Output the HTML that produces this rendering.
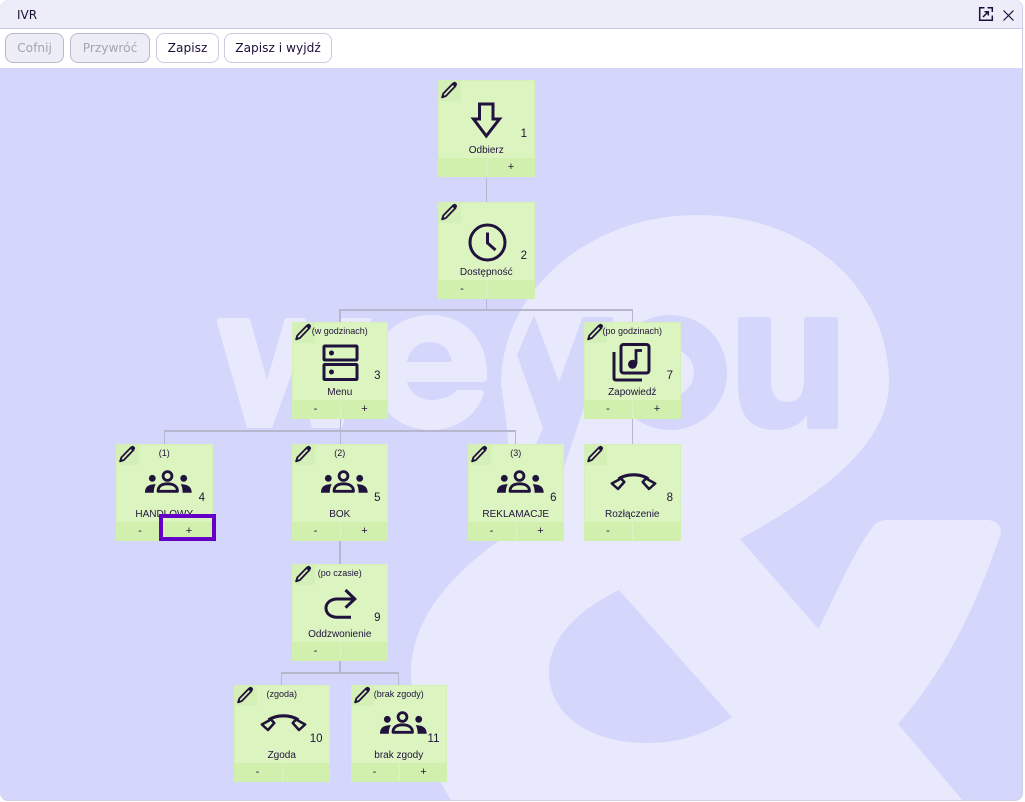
<!DOCTYPE html>
<html lang="pl"><head><meta charset="utf-8"><title>IVR</title>
<style>
*{box-sizing:border-box}
html,body{margin:0;padding:0;width:1025px;height:802px;overflow:hidden;background:#fff}
#win{position:absolute;left:0;top:0;width:1023px;height:801px;border:1px solid #cfd0e6;border-top:0;border-left:0;border-radius:8px;overflow:hidden;background:#d4d6fb}
#head{position:absolute;left:0;top:0;width:100%;height:29px;background:#ecedf8;border-bottom:1px solid #c9cae6;font:12px "DejaVu Sans","Liberation Sans",sans-serif;color:#1e0f3a}
#head span{position:absolute;left:17px;top:8px;line-height:14px}
#tool{position:absolute;left:0;top:29px;width:100%;height:39px;background:#fff}
.btn{position:absolute;top:4px;height:30px;border:1px solid #cbcbe2;border-radius:8px;background:#fff;color:#1e0f3a;font:12.2px/28px "DejaVu Sans","Liberation Sans",sans-serif;text-align:center}
.btn.d{background:#ecedf6;border-color:#b9b9c9;color:#a5a4b1}
#bg{position:absolute;left:0;top:0}
.c{position:absolute;background:#b6b6cc}
.n{position:absolute;width:96.5px;height:97px;background:#dcf5c0;border:1px solid #d6f1b8;font-family:"Liberation Sans",Arial,sans-serif;color:#20123c}
.n svg{position:absolute;left:-1px;top:-1px;width:97px;height:97px;overflow:visible}
.pc{position:absolute;left:-1px;top:-1px;width:23px;height:21px;background:#d5f0b6}
.t{position:absolute;left:-1px;width:96.5px;top:2px;line-height:12px;font-size:9px;text-align:center;white-space:nowrap}
.l{position:absolute;left:-1px;width:96.5px;top:63px;line-height:13px;font-size:10px;text-align:center;white-space:nowrap}
.k{position:absolute;right:6.5px;top:45.5px;line-height:15px;font-size:11.5px}
.bar{position:absolute;left:-1px;top:77px;width:96.5px;height:19px;background:#d1efad}
.bar:after{content:"";position:absolute;left:48px;top:1px;width:1px;height:17px;background:#dcf3c2}
.m,.p{position:absolute;top:2px;width:20px;text-align:center;font-size:11px;line-height:14px}
.m{left:14px}.p{left:63px}
#sel{position:absolute;left:159px;top:514px;width:57px;height:27px;border:4px solid #6500c9}
</style></head><body>
<svg width="0" height="0" style="position:absolute">
<defs>
<g id="pen" stroke="#20123c" stroke-linejoin="round" transform="translate(-.5 0)"><path d="M5.800 13.500 L4.600 17.400 L8.400 16 L18 6 L15.400 3.600 Z" fill="none" stroke-width="1.800"/><path d="M4.500 17.500 L5.300 15 L7 16.600 Z" fill="#20123c" stroke-width="1"/><path d="M15 4 L16.600 2.400 C17.500 1.800 19.600 3.700 18.900 4.800 L17.300 6.400 Z" fill="#20123c" stroke-width="1"/></g>
<g id="grp"><circle cx="51.500" cy="32" r="4.400" fill="none" stroke="#20123c" stroke-width="2.800"/><path d="M42 47.300 C42 42 46 39.800 51.500 39.800 C57 39.800 61.500 42 61.500 47.300 Z" fill="none" stroke="#20123c" stroke-width="2.800" stroke-linejoin="round"/><circle cx="36.300" cy="34.300" r="3.400" fill="#20123c"/><circle cx="67.700" cy="34.300" r="3.400" fill="#20123c"/><path d="M29 48.700 C29 43 32 40.300 39.800 40.100 C38.200 43 37.800 45.500 37.800 48.700 Z" fill="#20123c"/><path d="M75.700 48.700 C75.700 43 72 40.300 64.800 40.100 C66.300 43 66.600 45.500 66.600 48.700 Z" fill="#20123c"/></g>
<g id="ph" fill="none" stroke="#20123c" stroke-linejoin="round"><path stroke-width="3.200" d="M34.500 35 C39.500 31.500 45 30.800 49.500 30.800 C54 30.800 59.500 31.500 64.500 35"/><path stroke-width="2.500" d="M27.800 39.500 L37 34.500 L40.300 38 L34 45 Z M71.200 39.500 L62 34.500 L58.700 38 L65 45 Z"/></g>
</defs></svg>
<div id="win">
<svg id="bg" width="1025" height="802" viewBox="0 0 1025 802">
<path fill="#e8e9fd" d="M217 323 Q216 318 221 318 L247 318 Q250 318 250.500 321 L267 380 L285 318 L305 318 L322 380 L340 318 L372 318 L342 428 L312 428 L295 365 L272 428 L247 428 Z"/>
<path fill="#e8e9fd" fill-rule="evenodd" d="M430 315 C465 315 487 340 487 373 L487 378 Q487 382 482 382 L407 382 C410 393 420 400 431 400 C441 400 451 397 457 390 L479 390 Q486 390 483 396 C475 417 455 430 431 430 C397 430 372 405 372 372 C372 340 397 315 430 315 Z M407 362 H452 C450 350 442 342 430 342 C418 342 409 350 407 362 Z"/>
<path fill="#e8e9fd" fill-rule="evenodd" d="M501 385 C501 290 590 215 697 215 C810 215 889 290 889 382 C889 450 810 500 740 539 L818.500 629 C840 585 855 550 872 528 C875 523 880 520 888 520 L986 520 C996 520 1002 525 1000.600 534 C975 610 945 670 898 724 L964 802 L452 802 C428 763 411 720 411 673 C411 620 450 575 500 540 C515 500 510 440 501 385 Z M619 590 C575 612 549 640 549 672 C549 715 590 743 647 743 C680 743 708 733 732 717 Z"/>
<path fill="#d4d6fb" d="M534 315 L517 355 L543 428 L525 470 L563 470 L613 320 Q614 317 610 317 L585 317 Q582.500 317 582 319 L559 382 Z"/>
<path fill="#d4d6fb" fill-rule="evenodd" d="M670 315 C702 315 727 340 727 372.500 C727 405 702 430 670 430 C638 430 613 405 613 372.500 C613 340 638 315 670 315 Z M670 348.500 C657 348.500 646 359 646 372.500 C646 386 657 396.500 670 396.500 C683 396.500 694 386 694 372.500 C694 359 683 348.500 670 348.500 Z"/>
<path fill="#d4d6fb" d="M741 317 H768 Q771 317 771 320 V380 Q771 402 787 402 Q804 402 804 380 V320 Q804 317 807 317 H835 Q838 317 838 320 V426 Q838 429 835 429 H810 Q807 429 807 426 V415 Q797 430 775 430 Q738 430 738 385 V320 Q738 317 741 317 Z"/>
</svg>

<div class="c" style="left:486px;top:178px;width:1px;height:24px"></div>
<div class="c" style="left:486px;top:296px;width:1px;height:14px"></div>
<div class="c" style="left:339px;top:309px;width:294px;height:2px"></div>
<div class="c" style="left:339px;top:309px;width:2px;height:14px"></div>
<div class="c" style="left:632px;top:309px;width:1px;height:14px"></div>
<div class="c" style="left:340px;top:419px;width:1px;height:25px"></div>
<div class="c" style="left:164px;top:430px;width:352px;height:2px"></div>
<div class="c" style="left:164px;top:430px;width:1px;height:14px"></div>
<div class="c" style="left:515px;top:430px;width:1px;height:14px"></div>
<div class="c" style="left:632px;top:419px;width:1px;height:25px"></div>
<div class="c" style="left:339px;top:540px;width:2px;height:24px"></div>
<div class="c" style="left:339px;top:661px;width:2px;height:12px"></div>
<div class="c" style="left:281px;top:672px;width:118px;height:2px"></div>
<div class="c" style="left:281px;top:672px;width:1px;height:14px"></div>
<div class="c" style="left:398px;top:672px;width:1px;height:14px"></div>

<div class="n" style="left:438px;top:80px"><i class="pc"></i><svg viewBox="0 0 97 97"><use href="#pen"/><path d="M41.500 24 H55 V39 H61.500 L48.300 56 L35.500 39 H41.500 Z" fill="none" stroke="#20123c" stroke-width="3"/></svg><span class="l">Odbierz</span><span class="k">1</span><div class="bar"><span class="p">+</span></div></div>

<div class="n" style="left:438px;top:202px"><i class="pc"></i><svg viewBox="0 0 97 97"><use href="#pen"/><circle cx="49.500" cy="40.500" r="17.500" fill="none" stroke="#20123c" stroke-width="3"/><path d="M49.500 30.500 V41 L57.500 48" fill="none" stroke="#20123c" stroke-width="3"/></svg><span class="l">Dostępność</span><span class="k">2</span><div class="bar"><span class="m">-</span></div></div>

<div class="n" style="left:291.500px;top:322px"><i class="pc"></i><svg viewBox="0 0 97 97"><use href="#pen"/><rect x="32" y="24" width="33" height="14" rx=".8" fill="none" stroke="#20123c" stroke-width="3"/><rect x="32" y="42.500" width="33" height="15" rx=".8" fill="none" stroke="#20123c" stroke-width="3"/><circle cx="39.500" cy="31" r="2.500" fill="#20123c"/><circle cx="39.500" cy="50" r="2.500" fill="#20123c"/></svg><span class="t">(w godzinach)</span><span class="l">Menu</span><span class="k">3</span><div class="bar"><span class="m">-</span><span class="p">+</span></div></div>

<div class="n" style="left:584px;top:322px"><i class="pc"></i><svg viewBox="0 0 97 97"><use href="#pen"/><rect x="37" y="22.500" width="28" height="28.500" rx="2.500" fill="none" stroke="#20123c" stroke-width="3"/><path d="M30 30 V56 Q30 58 32 58 H58" fill="none" stroke="#20123c" stroke-width="3"/><circle cx="48.500" cy="42.300" r="4.500" fill="#20123c"/><path d="M52 42 V28.500 H58" fill="none" stroke="#20123c" stroke-width="2.800"/></svg><span class="t">(po godzinach)</span><span class="l">Zapowiedź</span><span class="k">7</span><div class="bar"><span class="m">-</span><span class="p">+</span></div></div>

<div class="n" style="left:116px;top:444px"><i class="pc"></i><svg viewBox="0 0 97 97"><use href="#pen"/><use href="#grp"/></svg><span class="t">(1)</span><span class="l">HANDLOWY</span><span class="k">4</span><div class="bar"><span class="m">-</span><span class="p">+</span></div></div>

<div class="n" style="left:291.500px;top:444px"><i class="pc"></i><svg viewBox="0 0 97 97"><use href="#pen"/><use href="#grp"/></svg><span class="t">(2)</span><span class="l">BOK</span><span class="k">5</span><div class="bar"><span class="m">-</span><span class="p">+</span></div></div>

<div class="n" style="left:467.500px;top:444px"><i class="pc"></i><svg viewBox="0 0 97 97"><use href="#pen"/><use href="#grp"/></svg><span class="t">(3)</span><span class="l">REKLAMACJE</span><span class="k">6</span><div class="bar"><span class="m">-</span><span class="p">+</span></div></div>

<div class="n" style="left:584px;top:444px"><i class="pc"></i><svg viewBox="0 0 97 97"><use href="#pen"/><use href="#ph"/></svg><span class="l">Rozłączenie</span><span class="k">8</span><div class="bar"><span class="m">-</span></div></div>

<div class="n" style="left:291.500px;top:564px"><i class="pc"></i><svg viewBox="0 0 97 97"><use href="#pen"/><path d="M53.500 26 L62.800 35 L53.500 43.700 M62.800 35 H45.500 C38.500 35 34 39 34 44 C34 49.500 38.500 53.300 45.500 53.300 H59" fill="none" stroke="#20123c" stroke-width="3"/></svg><span class="t">(po czasie)</span><span class="l">Oddzwonienie</span><span class="k">9</span><div class="bar"><span class="m">-</span></div></div>

<div class="n" style="left:233.500px;top:685px"><i class="pc"></i><svg viewBox="0 0 97 97"><use href="#pen"/><use href="#ph"/></svg><span class="t">(zgoda)</span><span class="l">Zgoda</span><span class="k">10</span><div class="bar"><span class="m">-</span></div></div>

<div class="n" style="left:350.500px;top:685px"><i class="pc"></i><svg viewBox="0 0 97 97"><use href="#pen"/><use href="#grp"/></svg><span class="t">(brak zgody)</span><span class="l">brak zgody</span><span class="k">11</span><div class="bar"><span class="m">-</span><span class="p">+</span></div></div>

<div id="sel"></div>

<div id="head"><span>IVR</span>
<svg style="position:absolute;left:978px;top:6px" width="16" height="16" viewBox="0 0 16 16" fill="none" stroke="#1e0f3a" stroke-width="1.500"><path d="M6.500 1.800 H1.700 V14.300 H14.300 V9.500"/><path d="M5 11 L10 6"/><path d="M6.500 5.700 H10.300 V9.500"/><path d="M9.500 1.800 H14.300 V6"/></svg>
<svg style="position:absolute;left:1002px;top:9px" width="13" height="13" viewBox="0 0 13 13" fill="none" stroke="#1e0f3a" stroke-width="1.200"><path d="M1.500 1.500 L11.500 11.500 M11.500 1.500 L1.500 11.500"/></svg>
</div>
<div id="tool">
<div class="btn d" style="left:5px;width:59px">Cofnij</div>
<div class="btn d" style="left:70px;width:80px">Przywróć</div>
<div class="btn" style="left:156px;width:63px">Zapisz</div>
<div class="btn" style="left:224px;width:108px">Zapisz i wyjdź</div>
</div>
</div>
</body></html>
